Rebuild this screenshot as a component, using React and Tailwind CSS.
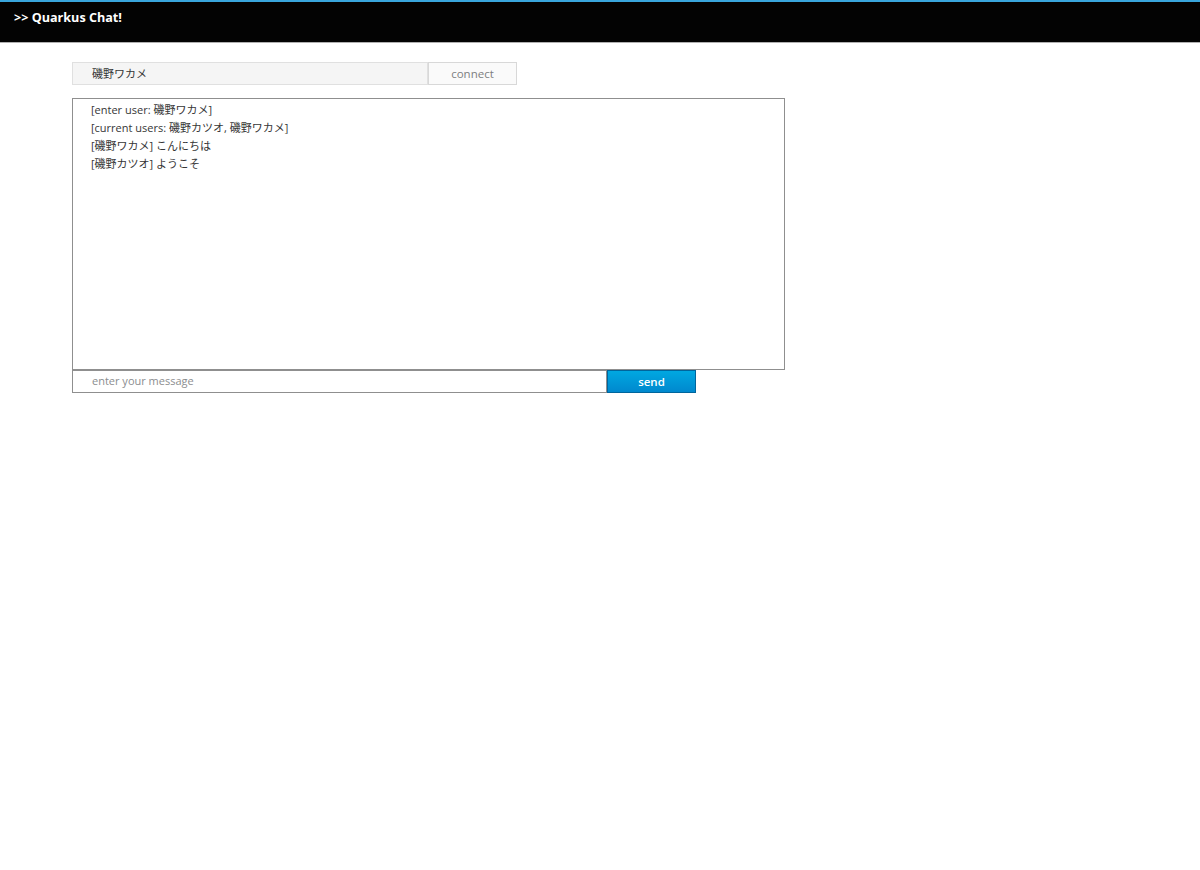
export default function App() {
  const font = { fontFamily: '"Open Sans", "Noto Sans CJK JP", sans-serif' };
  return (
    <div className="min-h-[870px] bg-white text-[11px] text-[#363636]" style={font}>
      <header className="h-[43px] bg-[#030303] border-t-2 border-[#39a5dc] border-b border-b-[#b0b0b0] px-[14px] pt-[7px]">
        <span className="text-white font-bold text-[12.6px] leading-[18px]">&gt;&gt; Quarkus Chat!</span>
      </header>
      <div className="pl-[72px] pt-[19px]">
        <div className="flex h-[23px]">
          <div className="w-[356px] h-full bg-[#f5f5f5] border border-[#e0e0e0] flex items-center pl-[19px] pt-[1px] text-[#363636]">
            磯野ワカメ
          </div>
          <div className="w-[89px] h-full bg-[#fafafa] border border-[#d8d8d8] flex items-center justify-center text-[#7d7f81] text-[11.5px]">
            connect
          </div>
        </div>
        <div className="mt-[13px] w-[713px] h-[272px] border border-[#8f8f8f] pl-[18px] pt-[2px] leading-[18px]">
          <div>[enter user: 磯野ワカメ]</div>
          <div>[current users: 磯野カツオ, 磯野ワカメ]</div>
          <div>[磯野ワカメ] こんにちは</div>
          <div>[磯野カツオ] ようこそ</div>
        </div>
        <div className="flex h-[23px]">
          <div className="w-[535px] h-full border border-[#8f8f8f] flex items-center pl-[19px] text-[#8b8d8f]">
            enter your message
          </div>
          <div className="w-[89px] h-full bg-gradient-to-b from-[#00a8e1] to-[#0088ce] border border-[#00659c] flex items-center justify-center text-white font-semibold text-[11.5px]">
            send
          </div>
        </div>
      </div>
    </div>
  );
}
